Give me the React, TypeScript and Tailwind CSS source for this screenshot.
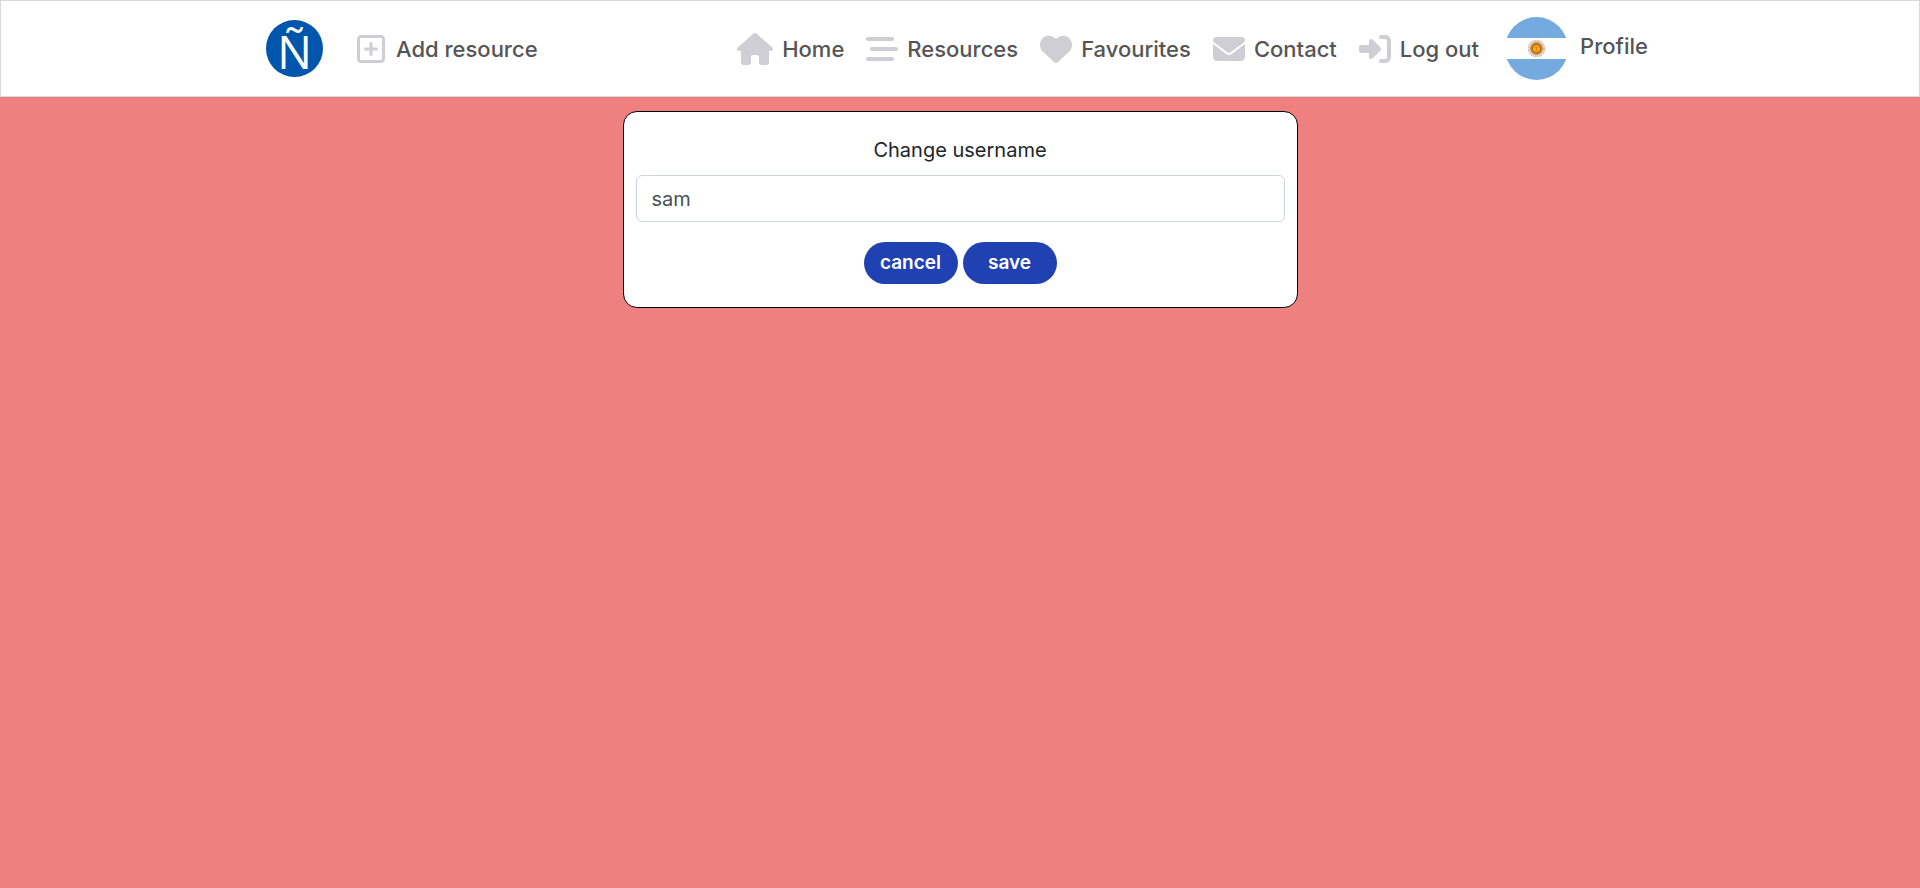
import { useState } from "react";
import type { ReactNode } from "react";
import {
  FaBarsStaggered,
  FaEnvelope,
  FaHeart,
  FaHouse,
  FaRegSquarePlus,
  FaRightToBracket,
} from "react-icons/fa6";

function NavLink({ icon, children }: { icon: ReactNode; children: ReactNode }) {
  return (
    <a href="#" className="flex items-center gap-[9px] text-[32px] text-[#cfced4]">
      {icon}
      <span className="text-[22px] leading-8 font-medium whitespace-nowrap text-[#555555]">{children}</span>
    </a>
  );
}

function Logo() {
  return (
    <a
      href="#"
      className="flex size-[57px] shrink-0 items-center justify-center rounded-full bg-[#0055ad] pt-1 font-['Open_Sans',sans-serif] text-[46px] leading-none text-white"
    >
      Ñ
    </a>
  );
}

function FlagAvatar() {
  return (
    <svg viewBox="0 0 63 63" className="size-[63px] shrink-0" aria-hidden="true">
      <clipPath id="avatar-circle">
        <circle cx="31.5" cy="31.5" r="31.5" />
      </clipPath>
      <g clipPath="url(#avatar-circle)">
        <rect width="63" height="63" fill="#fefefe" />
        <rect width="63" height="21" fill="#74aadd" />
        <rect y="42" width="63" height="21" fill="#74aadd" />
      </g>
      <circle cx="31.5" cy="31.5" r="7.6" fill="none" stroke="#dcbc9a" strokeWidth="2.4" strokeDasharray="1.5 0.5" />
      <circle cx="31.5" cy="31.5" r="6.4" fill="#c08a55" />
      <circle cx="31.5" cy="31.5" r="4.2" fill="#f6b01a" stroke="#b8650c" strokeWidth="1.3" />
      <path d="M29.3 30.3h4.4M31.5 30.5v2.4M30.3 33.2h2.4" stroke="#c57f0c" strokeWidth="0.8" fill="none" />
    </svg>
  );
}

const buttonClass =
  "h-[42px] w-[94px] rounded-full bg-[#2041b2] text-[19px] font-semibold text-white";

export default function App() {
  const [name, setName] = useState("sam");
  return (
    <div className="min-h-screen bg-[#f08080] font-['Inter',sans-serif] text-[#212529]">
      <header className="border border-[#d8d8dd] bg-white">
        <nav className="mx-auto flex h-[95px] max-w-[1388px] items-center justify-between pr-[6px]">
          <div className="flex items-center gap-8">
            <Logo />
            <NavLink icon={<FaRegSquarePlus />}>Add resource</NavLink>
          </div>
          <div className="flex items-center gap-[22px]">
            <NavLink icon={<FaHouse className="w-9" />}>Home</NavLink>
            <NavLink icon={<FaBarsStaggered />}>Resources</NavLink>
            <NavLink icon={<FaHeart />}>Favourites</NavLink>
            <NavLink icon={<FaEnvelope />}>Contact</NavLink>
            <NavLink icon={<FaRightToBracket />}>Log out</NavLink>
            <a href="#" className="ml-1 flex gap-3">
              <FlagAvatar />
              <span className="pt-[13px] text-[22px] leading-8 font-medium text-[#555555]">Profile</span>
            </a>
          </div>
        </nav>
      </header>
      <main className="px-4 pt-[14px]">
        <form
          onSubmit={(e) => e.preventDefault()}
          className="mx-auto flex max-w-[675px] flex-col rounded-[14px] border border-black bg-white px-3 pt-[23px] pb-[23px]"
        >
          <label htmlFor="username" className="text-center text-xl leading-[30px]">
            Change username
          </label>
          <input
            id="username"
            value={name}
            onChange={(e) => setName(e.target.value)}
            className="mt-[10px] h-[47px] w-full rounded-md border border-[#ced4da] bg-white px-[15px] text-xl text-[#495057] outline-none"
          />
          <div className="mt-5 flex justify-center gap-[5px]">
            <button type="button" className={buttonClass}>
              cancel
            </button>
            <button type="submit" className={buttonClass}>
              save
            </button>
          </div>
        </form>
      </main>
    </div>
  );
}
